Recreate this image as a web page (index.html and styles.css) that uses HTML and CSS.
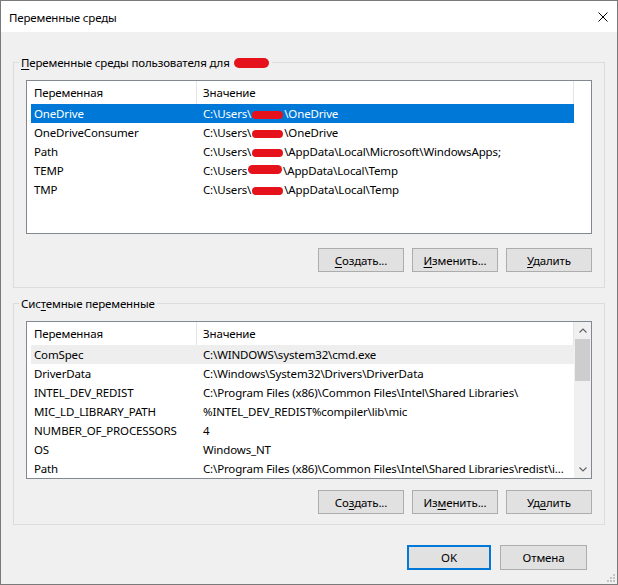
FILE: index.html
```html
<!DOCTYPE html>
<html lang="ru">
<head>
<meta charset="utf-8">
<title>Переменные среды</title>
<link rel="stylesheet" href="styles.css">
</head>
<body>
<div class="window">
  <div class="titlebar">
    <span class="title">Переменные среды</span>
    <svg class="close" viewBox="0 0 10 10" width="10" height="10"><path d="M0.5 0.5 L9.5 9.5 M9.5 0.5 L0.5 9.5" stroke="#000" stroke-width="1" fill="none"/></svg>
  </div>
  <div class="content">
    <fieldset class="group group-user">
      <legend><u>П</u>еременные среды пользователя для <span class="redact redact-legend"></span></legend>
      <div class="list list-user">
        <div class="list-main">
          <div class="list-head">
            <div class="hcell c1">Переменная</div>
            <div class="hcell c2">Значение</div>
          </div>
          <div class="row selected"><div class="cell c1">OneDrive</div><div class="cell c2">C:\Users\<span class="redact"></span>\OneDrive</div></div>
          <div class="row"><div class="cell c1">OneDriveConsumer</div><div class="cell c2">C:\Users\<span class="redact"></span>\OneDrive</div></div>
          <div class="row"><div class="cell c1">Path</div><div class="cell c2">C:\Users\<span class="redact"></span>\AppData\Local\Microsoft\WindowsApps;</div></div>
          <div class="row"><div class="cell c1">TEMP</div><div class="cell c2">C:\Users<span class="redact redact-up"></span>\AppData\Local\Temp</div></div>
          <div class="row"><div class="cell c1">TMP</div><div class="cell c2">C:\Users\<span class="redact"></span>\AppData\Local\Temp</div></div>
        </div>
      </div>
      <div class="btn-row">
        <button class="btn"><u>С</u>оздать...</button>
        <button class="btn"><u>И</u>зменить...</button>
        <button class="btn"><u>У</u>далить</button>
      </div>
    </fieldset>

    <fieldset class="group group-system">
      <legend>Сис<u>т</u>емные переменные</legend>
      <div class="list list-system">
        <div class="list-main">
          <div class="list-head">
            <div class="hcell c1">Переменная</div>
            <div class="hcell c2">Значение</div>
          </div>
          <div class="row hover"><div class="cell c1">ComSpec</div><div class="cell c2">C:\WINDOWS\system32\cmd.exe</div></div>
          <div class="row"><div class="cell c1">DriverData</div><div class="cell c2">C:\Windows\System32\Drivers\DriverData</div></div>
          <div class="row"><div class="cell c1">INTEL_DEV_REDIST</div><div class="cell c2">C:\Program Files (x86)\Common Files\Intel\Shared Libraries\</div></div>
          <div class="row"><div class="cell c1">MIC_LD_LIBRARY_PATH</div><div class="cell c2">%INTEL_DEV_REDIST%compiler\lib\mic</div></div>
          <div class="row"><div class="cell c1">NUMBER_OF_PROCESSORS</div><div class="cell c2">4</div></div>
          <div class="row"><div class="cell c1">OS</div><div class="cell c2">Windows_NT</div></div>
          <div class="row"><div class="cell c1">Path</div><div class="cell c2">C:\Program Files (x86)\Common Files\Intel\Shared Libraries\redist\i...</div></div>
        </div>
        <div class="vscroll">
          <div class="sb-arrow"><svg viewBox="0 0 8 5" width="8" height="5"><path d="M0.5 4.5 L4 1 L7.5 4.5" stroke="#606060" stroke-width="1.1" fill="none"/></svg></div>
          <div class="sb-track"><div class="sb-thumb"></div></div>
          <div class="sb-arrow"><svg viewBox="0 0 8 5" width="8" height="5"><path d="M0.5 0.5 L4 4 L7.5 0.5" stroke="#606060" stroke-width="1.1" fill="none"/></svg></div>
        </div>
      </div>
      <div class="btn-row btn-row-sys">
        <button class="btn">Со<u>з</u>дать...</button>
        <button class="btn">Из<u>м</u>енить...</button>
        <button class="btn">Уд<u>а</u>лить</button>
      </div>
    </fieldset>

    <div class="dialog-buttons">
      <button class="btn btn-ok">OK</button>
      <button class="btn btn-cancel">Отмена</button>
    </div>
  </div>
  <svg class="grip" viewBox="0 0 11 11" width="11" height="11">
    <rect x="8" y="2" width="2" height="2" fill="#c4c4c4"/>
    <rect x="5" y="5" width="2" height="2" fill="#c4c4c4"/>
    <rect x="8" y="5" width="2" height="2" fill="#c4c4c4"/>
    <rect x="2" y="8" width="2" height="2" fill="#c4c4c4"/>
    <rect x="5" y="8" width="2" height="2" fill="#c4c4c4"/>
    <rect x="8" y="8" width="2" height="2" fill="#c4c4c4"/>
  </svg>
</div>
</body>
</html>
```
FILE: styles.css
```css
html, body {
  margin: 0;
  padding: 0;
  background: #ffffff;
}

body {
  font-family: "Noto Sans", "Open Sans", sans-serif;
  font-size: 11.5px;
  letter-spacing: -0.15px;
  color: #000;
}

.window {
  position: relative;
  width: 618px;
  height: 585px;
  box-sizing: border-box;
  border: 1px solid #7a7a7a;
  background: #f0f0f0;
  display: flex;
  flex-direction: column;
}

.titlebar {
  height: 31px;
  flex: none;
  background: #ffffff;
  display: flex;
  align-items: center;
  justify-content: space-between;
  padding: 0 9px 0 8px;
}

.title {
  line-height: 15px;
  padding-top: 1px;
}

.close {
  display: block;
}

.content {
  display: flex;
  flex-direction: column;
}

.group {
  margin: 23px 12px 0;
  padding: 10px 12px 15px;
  border: 1px solid #dcdcdc;
  min-width: 0;
}

.group-system {
  margin-top: 8px;
  padding-bottom: 10px;
}

.group legend {
  padding: 0 2px;
  margin-left: -7px;
  line-height: 15px;
}

u {
  text-decoration: underline;
  text-underline-offset: 2px;
}

.redact {
  display: inline-block;
  width: 31px;
  height: 8px;
  margin: 0 1px;
  border-radius: 5px;
  background: #e5121b;
  vertical-align: -1px;
}

.redact-up {
  vertical-align: 1px;
  height: 9px;
  width: 34px;
}

.redact-legend {
  width: 35px;
  height: 10px;
  vertical-align: -1px;
}

.list {
  display: flex;
  border: 1px solid #828790;
  background: #ffffff;
  overflow: hidden;
}

.list-user {
  height: 154px;
  box-sizing: border-box;
}

.list-system {
  height: 158px;
  box-sizing: border-box;
}

.list-main {
  flex: 1;
  min-width: 0;
  overflow: hidden;
}

.list-head {
  display: flex;
  height: 23px;
  align-items: stretch;
}

.hcell {
  box-sizing: border-box;
  border-right: 1px solid #e5e5e5;
  display: flex;
  align-items: center;
  white-space: nowrap;
}

.hcell.c1 {
  width: 170px;
  padding-left: 7px;
}

.hcell.c2 {
  width: 377px;
  padding-left: 6px;
}

.row {
  display: flex;
  height: 19px;
  margin-left: 4px;
  width: 543px;
  align-items: center;
  white-space: nowrap;
}

.row .cell {
  box-sizing: border-box;
  overflow: hidden;
  text-overflow: ellipsis;
  line-height: 15px;
}

.row .c1 {
  width: 166px;
  padding-left: 3px;
}

.row .c2 {
  width: 377px;
  padding-left: 6px;
}

.row.selected {
  background: #0078d7;
  color: #ffffff;
}

.row.hover {
  background: #eeeeee;
}

.vscroll {
  width: 17px;
  flex: none;
  display: flex;
  flex-direction: column;
  background: #f0f0f0;
}

.sb-arrow {
  height: 17px;
  display: flex;
  align-items: center;
  justify-content: center;
  flex: none;
}

.sb-arrow svg {
  display: block;
}

.sb-track {
  flex: 1;
}

.sb-thumb {
  height: 42px;
  margin: 0 1px;
  background: #cdcdcd;
}

.btn-row {
  display: flex;
  justify-content: flex-end;
  gap: 8px;
  margin-top: 14px;
}

.btn-row-sys {
  margin-top: 11px;
}

.btn {
  font: inherit;
  letter-spacing: inherit;
  color: #000;
  width: 86px;
  height: 24px;
  box-sizing: border-box;
  background: #e1e1e1;
  border: 1px solid #adadad;
  border-radius: 0;
  padding: 0;
  margin: 0;
  line-height: 15px;
}

.dialog-buttons {
  display: flex;
  justify-content: flex-end;
  gap: 9px;
  margin-top: 20px;
  padding-right: 30px;
}

.btn-ok {
  width: 84px;
  height: 25px;
  border: 2px solid #0078d7;
}

.btn-cancel {
  width: 87px;
  height: 25px;
}

.grip {
  position: absolute;
  right: 1px;
  bottom: 1px;
  display: block;
}
```
